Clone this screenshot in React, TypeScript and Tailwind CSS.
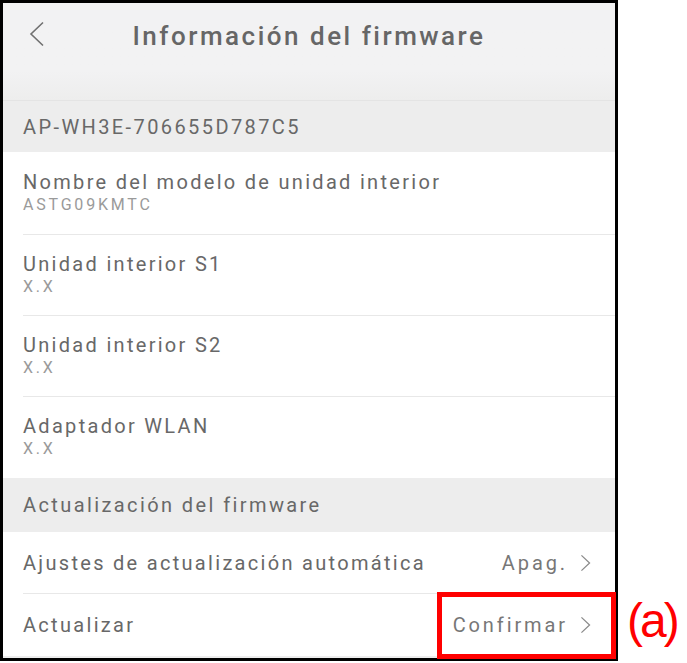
import React from "react";

const rows = [
  { title: "Nombre del modelo de unidad interior", value: "ASTG09KMTC" },
  { title: "Unidad interior S1", value: "X.X" },
  { title: "Unidad interior S2", value: "X.X" },
  { title: "Adaptador WLAN", value: "X.X" },
];

const Chevron: React.FC<{ className?: string }> = ({ className }) => (
  <svg viewBox="0 0 12 20" className={className} fill="none" stroke="currentColor" strokeWidth="1.4">
    <path d="M1.5 1.5 L10.5 10 L1.5 18.5" />
  </svg>
);

const SectionHeader: React.FC<{ label: string; className?: string }> = ({ label, className }) => (
  <div className={`flex items-center bg-[#ededed] px-[20px] text-[20px] tracking-[2.4px] text-[#686868] ${className ?? ""}`}>
    {label}
  </div>
);

const LinkRow: React.FC<{ label: string; value: string; divider?: boolean }> = ({ label, value, divider }) => (
  <div className="pl-[20px]">
    <div className={`flex h-[62px] items-center justify-between pr-[24px] ${divider ? "border-b border-[#e8e8e8]" : ""}`}>
      <span className="text-[20px] tracking-[2.3px] text-[#686868]">{label}</span>
      <span className="flex items-center gap-[12px] text-[20px] tracking-[2.9px] text-[#777]">
        {value}
        <Chevron className="h-[18px] w-[11px] text-[#8a8a8a]" />
      </span>
    </div>
  </div>
);

export default function App() {
  return (
    <div className="relative h-[663px] w-[687px] bg-white" style={{ fontFamily: "Roboto, 'Liberation Sans', sans-serif" }}>
      <div className="flex h-[661px] w-[618px] flex-col overflow-hidden border-[3px] border-black bg-[#ededed]">
        {/* header */}
        <div className="relative flex h-[97px] shrink-0 items-start justify-center bg-gradient-to-b from-[#f2f2f3] from-70% to-[#ededed] pt-[14px]">
          <svg
            viewBox="0 0 18 26"
            className="absolute left-[25px] top-[18px] h-[26px] w-[18px] text-[#707070]"
            fill="none"
            stroke="currentColor"
            strokeWidth="1.6"
          >
            <path d="M15 1.5 L3 13 L15 24.5" />
          </svg>
          <h1 className="text-[26px] font-medium tracking-[2.5px] text-[#666]">Información del firmware</h1>
        </div>
        <SectionHeader label="AP-WH3E-706655D787C5" className="h-[52px] shrink-0 border-t border-[#e4e4e4]" />

        <div className="bg-white pl-[20px]">
          {rows.map((r, i) => (
            <div
              key={r.title}
              className={`flex flex-col justify-center pb-[3px] ${i === 0 ? "h-[83px]" : "h-[81px]"} ${
                i < rows.length - 1 ? "border-b border-[#e8e8e8]" : ""
              }`}
            >
              <span className="text-[20px] leading-[26px] tracking-[2.3px] text-[#686868]">{r.title}</span>
              <span className="text-[16px] leading-[20px] tracking-[2.8px] text-[#9a9a9a]">{r.value}</span>
            </div>
          ))}
        </div>

        <SectionHeader label="Actualización del firmware" className="h-[54px] shrink-0" />

        <div className="bg-white">
          <LinkRow label="Ajustes de actualización automática" value="Apag." divider />
          <LinkRow label="Actualizar" value="Confirmar" />
        </div>
      </div>

      {/* callout */}
      <div className="absolute left-[437px] top-[592px] h-[67px] w-[179px] border-[5px] border-[#ff0000]" />
      <span
        className="absolute left-[627px] top-[597px] text-[48px] leading-none tracking-[-3px] text-[#ff0000]"
        style={{ fontFamily: "'Liberation Sans', Arial, sans-serif" }}
      >
        (a)
      </span>
    </div>
  );
}
